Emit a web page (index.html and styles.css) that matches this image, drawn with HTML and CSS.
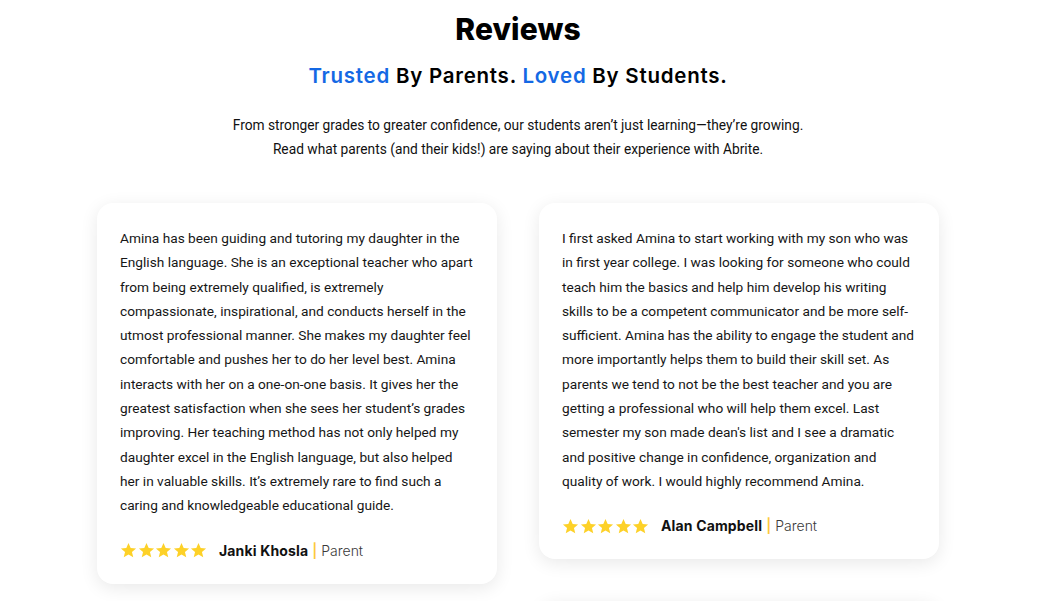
FILE: index.html
```html
<!DOCTYPE html>
<html lang="en">
<head>
<meta charset="utf-8">
<title>Reviews</title>
<link rel="stylesheet" href="styles.css">
</head>
<body>
<section class="reviews">
  <h1 class="title">Reviews</h1>
  <h2 class="subtitle"><span class="accent">Trusted</span> By Parents. <span class="accent">Loved</span> By Students.</h2>
  <p class="intro">From stronger grades to greater confidence, our students aren’t just learning—they’re growing.<br>Read what parents (and their kids!) are saying about their experience with Abrite.</p>
  <div class="grid">
    <div class="col">
      <article class="card">
        <p class="quote">Amina has been guiding and tutoring my daughter in the English language. She is an exceptional teacher who apart from being extremely qualified, is extremely compassionate, inspirational, and conducts herself in the utmost professional manner. She makes my daughter feel comfortable and pushes her to do her level best. Amina interacts with her on a one-on-one basis. It gives her the greatest satisfaction when she sees her student’s grades improving. Her teaching method has not only helped my daughter excel in the English language, but also helped her in valuable skills. It’s extremely rare to find such a caring and knowledgeable educational guide.</p>
        <div class="meta">
          <span class="stars">
            <svg viewBox="0 0 24 24"><path d="M12 1.5l3.1 7.1 7.6.6-5.8 5 1.8 7.5L12 17.7l-6.7 4 1.8-7.5-5.8-5 7.6-.6z"/></svg>
            <svg viewBox="0 0 24 24"><path d="M12 1.5l3.1 7.1 7.6.6-5.8 5 1.8 7.5L12 17.7l-6.7 4 1.8-7.5-5.8-5 7.6-.6z"/></svg>
            <svg viewBox="0 0 24 24"><path d="M12 1.5l3.1 7.1 7.6.6-5.8 5 1.8 7.5L12 17.7l-6.7 4 1.8-7.5-5.8-5 7.6-.6z"/></svg>
            <svg viewBox="0 0 24 24"><path d="M12 1.5l3.1 7.1 7.6.6-5.8 5 1.8 7.5L12 17.7l-6.7 4 1.8-7.5-5.8-5 7.6-.6z"/></svg>
            <svg viewBox="0 0 24 24"><path d="M12 1.5l3.1 7.1 7.6.6-5.8 5 1.8 7.5L12 17.7l-6.7 4 1.8-7.5-5.8-5 7.6-.6z"/></svg>
          </span>
          <span class="name">Janki Khosla</span>
          <span class="sep">|</span>
          <span class="role">Parent</span>
        </div>
      </article>
    </div>
    <div class="col">
      <article class="card">
        <p class="quote">I first asked Amina to start working with my son who was in first year college. I was looking for someone who could teach him the basics and help him develop his writing skills to be a competent communicator and be more self-sufficient. Amina has the ability to engage the student and more importantly helps them to build their skill set. As parents we tend to not be the best teacher and you are getting a professional who will help them excel. Last semester my son made dean's list and I see a dramatic and positive change in confidence, organization and quality of work. I would highly recommend Amina.</p>
        <div class="meta">
          <span class="stars">
            <svg viewBox="0 0 24 24"><path d="M12 1.5l3.1 7.1 7.6.6-5.8 5 1.8 7.5L12 17.7l-6.7 4 1.8-7.5-5.8-5 7.6-.6z"/></svg>
            <svg viewBox="0 0 24 24"><path d="M12 1.5l3.1 7.1 7.6.6-5.8 5 1.8 7.5L12 17.7l-6.7 4 1.8-7.5-5.8-5 7.6-.6z"/></svg>
            <svg viewBox="0 0 24 24"><path d="M12 1.5l3.1 7.1 7.6.6-5.8 5 1.8 7.5L12 17.7l-6.7 4 1.8-7.5-5.8-5 7.6-.6z"/></svg>
            <svg viewBox="0 0 24 24"><path d="M12 1.5l3.1 7.1 7.6.6-5.8 5 1.8 7.5L12 17.7l-6.7 4 1.8-7.5-5.8-5 7.6-.6z"/></svg>
            <svg viewBox="0 0 24 24"><path d="M12 1.5l3.1 7.1 7.6.6-5.8 5 1.8 7.5L12 17.7l-6.7 4 1.8-7.5-5.8-5 7.6-.6z"/></svg>
          </span>
          <span class="name">Alan Campbell</span>
          <span class="sep">|</span>
          <span class="role">Parent</span>
        </div>
      </article>
      <article class="card card-next" aria-hidden="true"></article>
    </div>
  </div>
</section>
</body>
</html>
```

FILE: styles.css
```css
* { box-sizing: border-box; }
html, body { margin: 0; padding: 0; background: #fff; }
body { font-family: Roboto, "Liberation Sans", sans-serif; color: #111; overflow: hidden; }

.reviews {
  width: 1036px;
  display: flex;
  flex-direction: column;
  align-items: center;
  padding-top: 10px;
}

.title {
  font-family: Inter, "Noto Sans", sans-serif;
  font-weight: 800;
  font-size: 30px;
  line-height: 38px;
  margin: 0;
  color: #000;
  letter-spacing: 0.1px;
}

.subtitle {
  font-family: Inter, "Noto Sans", sans-serif;
  font-weight: 600;
  font-size: 20.5px;
  line-height: 28px;
  margin: 14px 0 0;
  color: #000;
  letter-spacing: 0.75px;
}
.accent { color: #1468e4; }

.intro {
  margin: 23px 0 0;
  text-align: center;
  font-size: 13.75px;
  line-height: 24px;
  color: #111;
}

.grid {
  display: flex;
  gap: 42px;
  margin-top: 42px;
  align-items: flex-start;
}
.col {
  width: 400px;
  display: flex;
  flex-direction: column;
  gap: 42px;
}

.card {
  background: #fff;
  border-radius: 16px;
  box-shadow: 0 4px 18px rgba(0, 0, 0, 0.09);
  padding: 23px 23px 21px 23px;
}
.card-next { height: 200px; }

.quote {
  margin: 0;
  font-size: 13.7px;
  line-height: 24.3px;
  color: #161616;
}

.meta {
  display: flex;
  align-items: center;
  margin-top: 21px;
  font-family: Inter, "Noto Sans", sans-serif;
  font-size: 14px;
  line-height: 24px;
}
.stars {
  display: flex;
  gap: 0.5px;
  margin-right: 12px;
}
.stars svg {
  width: 17px;
  height: 17px;
  fill: #fdd128;
  display: block;
}
.name { font-weight: 700; color: #111; letter-spacing: 0.15px; }
.sep { color: #fdc93a; margin: 0 4px 0 4px; font-weight: 600; }
.role { color: #3a3a3a; font-weight: 300; }
```
